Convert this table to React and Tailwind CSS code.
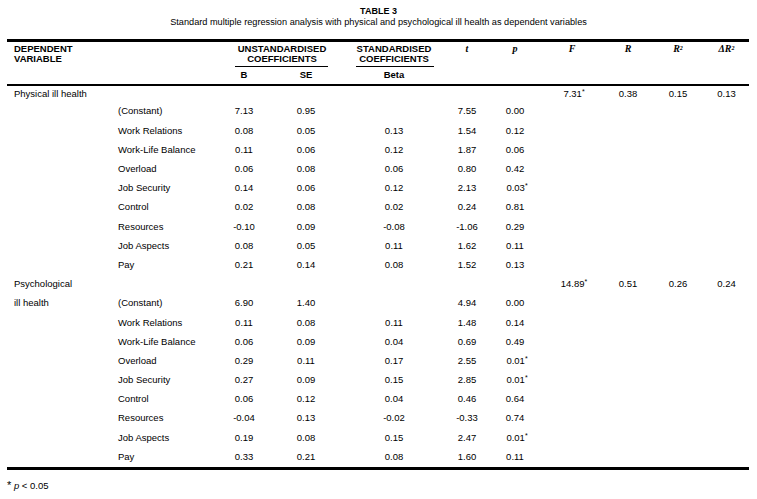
import React from 'react';

const cols = 'grid grid-cols-[104px_109px_48px_76px_100px_46px_50px_64px_48px_52px_45px]';

const groups = [
  {
    label: 'Physical ill health',
    label2: '',
    F: '7.31', R: '0.38', R2: '0.15', dR2: '0.13',
    rows: [
      ['(Constant)', '7.13', '0.95', '', '7.55', '0.00'],
      ['Work Relations', '0.08', '0.05', '0.13', '1.54', '0.12'],
      ['Work-Life Balance', '0.11', '0.06', '0.12', '1.87', '0.06'],
      ['Overload', '0.06', '0.08', '0.06', '0.80', '0.42'],
      ['Job Security', '0.14', '0.06', '0.12', '2.13', '0.03*'],
      ['Control', '0.02', '0.08', '0.02', '0.24', '0.81'],
      ['Resources', '-0.10', '0.09', '-0.08', '-1.06', '0.29'],
      ['Job Aspects', '0.08', '0.05', '0.11', '1.62', '0.11'],
      ['Pay', '0.21', '0.14', '0.08', '1.52', '0.13'],
    ],
  },
  {
    label: 'Psychological',
    label2: 'ill health',
    F: '14.89', R: '0.51', R2: '0.26', dR2: '0.24',
    rows: [
      ['(Constant)', '6.90', '1.40', '', '4.94', '0.00'],
      ['Work Relations', '0.11', '0.08', '0.11', '1.48', '0.14'],
      ['Work-Life Balance', '0.06', '0.09', '0.04', '0.69', '0.49'],
      ['Overload', '0.29', '0.11', '0.17', '2.55', '0.01*'],
      ['Job Security', '0.27', '0.09', '0.15', '2.85', '0.01*'],
      ['Control', '0.06', '0.12', '0.04', '0.46', '0.64'],
      ['Resources', '-0.04', '0.13', '-0.02', '-0.33', '0.74'],
      ['Job Aspects', '0.19', '0.08', '0.15', '2.47', '0.01*'],
      ['Pay', '0.33', '0.21', '0.08', '1.60', '0.11'],
    ],
  },
];

function Val({ v }) {
  if (v.endsWith('*')) {
    return (
      <span>
        {v.slice(0, -1)}
        <span className="text-[7px] align-top -mr-[4px]">*</span>
      </span>
    );
  }
  return <span>{v}</span>;
}

function Num({ v }) {
  return (
    <div className="flex items-center justify-center">
      <Val v={v} />
    </div>
  );
}

function Group({ g }) {
  return (
    <>
      <div className={`${cols} h-[19.2px] items-center first:h-[16px]`}>
        <div className="pl-[7px]">{g.label}</div>
        <div />
        <div />
        <div />
        <div />
        <div />
        <div />
        <Num v={g.F + '*'} />
        <Num v={g.R} />
        <Num v={g.R2} />
        <Num v={g.dR2} />
      </div>
      {g.rows.map((r, i) => (
        <div key={i} className={`${cols} h-[19.2px] items-center`}>
          <div className="pl-[7px]">{i === 0 ? g.label2 : ''}</div>
          <div className="pl-[7px]">{r[0]}</div>
          <Num v={r[1]} />
          <Num v={r[2]} />
          <Num v={r[3]} />
          <Num v={r[4]} />
          <Num v={r[5]} />
        </div>
      ))}
    </>
  );
}

export default function App() {
  return (
    <div className="w-[757px] h-[499px] bg-white text-black font-['Liberation_Sans',Arial,sans-serif] text-[9.5px]">
      <div className="pt-[6px] text-center">
        <div className="font-bold text-[9px] leading-[11px]">TABLE 3</div>
        <div className="text-[9.2px] leading-[11px]">
          Standard multiple regression analysis with physical and psychological ill health as dependent variables
        </div>
      </div>

      <div className="ml-[7px] w-[742px] mt-[11px] border-t-[3px] border-black">
        <div className={`${cols} grid-rows-[25px_17px] border-b-2 border-black font-bold`}>
          <div className="row-span-2 pl-[7px] pt-[2px] leading-[10px]">
            DEPENDENT
            <br />
            VARIABLE
          </div>
          <div className="row-span-2" />
          <div className="col-span-2 flex flex-col">
            <div className="pt-[2px] leading-[10px] text-center">
              UNSTANDARDISED
              <br />
              COEFFICIENTS
            </div>
            <div className="mt-auto ml-[15px] mr-[16px] h-px bg-black" />
          </div>
          <div className="flex flex-col">
            <div className="pt-[2px] leading-[10px] text-center">
              STANDARDISED
              <br />
              COEFFICIENTS
            </div>
            <div className="mt-auto ml-[12px] mr-[10px] h-px bg-black" />
          </div>
          <div className="row-span-2 pt-[1px] text-center font-['Liberation_Serif',serif] italic text-[10px] leading-[11px]">t</div>
          <div className="row-span-2 pt-[1px] text-center font-['Liberation_Serif',serif] italic text-[10px] leading-[11px]">p</div>
          <div className="row-span-2 pt-[1px] text-center font-['Liberation_Serif',serif] italic text-[10px] leading-[11px]">F</div>
          <div className="row-span-2 pt-[1px] text-center font-['Liberation_Serif',serif] italic text-[10px] leading-[11px]">R</div>
          <div className="row-span-2 pt-[1px] text-center font-['Liberation_Serif',serif] italic text-[10px] leading-[11px]">
            R<span className="text-[6px] align-top">2</span>
          </div>
          <div className="row-span-2 pt-[1px] text-center font-['Liberation_Serif',serif] italic text-[10px] leading-[11px]">
            ΔR<span className="text-[6px] align-top">2</span>
          </div>
          <div className="flex items-center justify-center">B</div>
          <div className="flex items-center justify-center">SE</div>
          <div className="flex items-center justify-center">Beta</div>
        </div>

        <div className="border-b-[3px] border-black">
          {groups.map((g, i) => (
            <Group key={i} g={g} />
          ))}
        </div>
      </div>

      <div className="ml-[7px] mt-[9px] leading-[12px]">
        <span className="text-[11px]">*</span>{' '}
        <span className="italic">p</span> &lt; 0.05
      </div>
    </div>
  );
}
